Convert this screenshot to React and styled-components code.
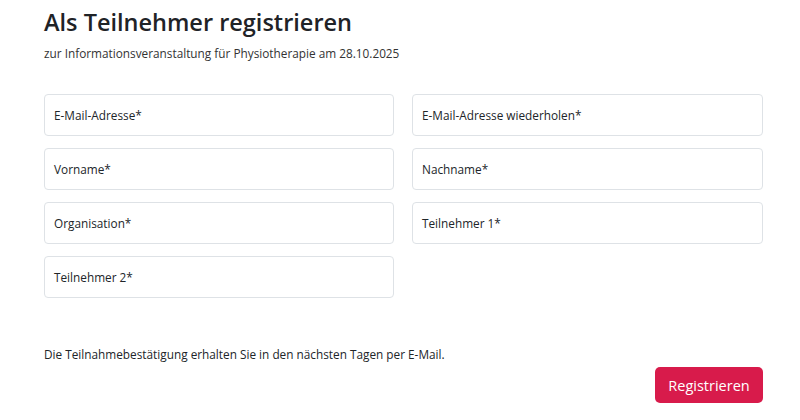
import styled, { createGlobalStyle } from "styled-components";

const Global = createGlobalStyle`
  body {
    margin: 0;
    background: #fff;
    font-family: "Open Sans", "Liberation Sans", sans-serif;
    color: #212529;
  }
`

const Page = styled.div`
  width: 719px;
  padding: 6px 0 0 44px;
`

const Title = styled.h1`
  margin: 0;
  font-size: 23.5px;
  font-weight: 600;
  line-height: 32px;
  color: #1f2327;
`

const Subtitle = styled.div`
  margin-top: 6px;
  font-size: 11.8px;
  line-height: 18px;
  color: #333;
`

const Grid = styled.div`
  margin-top: 32px;
  display: grid;
  grid-template-columns: 350px 351px;
  column-gap: 18px;
  row-gap: 12px;
`

const Field = styled.div`
  height: 42px;
  box-sizing: border-box;
  border: 1px solid #dee2e6;
  border-radius: 4px;
  padding: 0 9px;
  display: flex;
  align-items: center;
  font-size: 11.8px;
  color: #212529;
`

const Note = styled.div`
  margin-top: 47px;
  font-size: 11.8px;
  line-height: 18px;
  color: #212529;
`

const Actions = styled.div`
  display: flex;
  justify-content: flex-end;
  margin-top: 4px;
`

const Button = styled.button`
  height: 36px;
  width: 108px;
  border: none;
  border-radius: 5px;
  background: #d81b4b;
  color: #fff;
  font-family: inherit;
  font-size: 14.5px;
`

const fields = [
  "E-Mail-Adresse*",
  "E-Mail-Adresse wiederholen*",
  "Vorname*",
  "Nachname*",
  "Organisation*",
  "Teilnehmer 1*",
  "Teilnehmer 2*",
]

export default function App() {
  return (
    <>
      <Global />
      <Page>
        <Title>Als Teilnehmer registrieren</Title>
        <Subtitle>zur Informationsveranstaltung für Physiotherapie am 28.10.2025</Subtitle>
        <Grid>
          {fields.map((f) => <Field key={f}>{f}</Field>)}
        </Grid>
        <Note>Die Teilnahmebestätigung erhalten Sie in den nächsten Tagen per E-Mail.</Note>
        <Actions><Button>Registrieren</Button></Actions>
      </Page>
    </>
  )
}
